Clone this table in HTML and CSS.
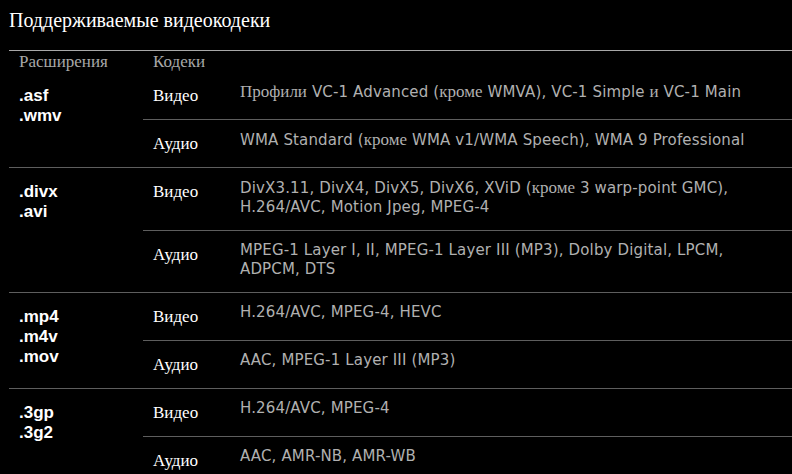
FILE: index.html
```html
<!DOCTYPE html>
<html lang="ru">
<head>
<meta charset="utf-8">
<title>Поддерживаемые видеокодеки</title>
<link rel="stylesheet" href="styles.css">
</head>
<body>
<div class="page">
  <h2 class="title">Поддерживаемые видеокодеки</h2>
  <table class="codecs">
    <thead>
      <tr>
        <th class="h-ext">Расширения</th>
        <th class="h-codec" colspan="2">Кодеки</th>
      </tr>
    </thead>
    <tbody>
      <tr class="grp first">
        <td class="ext" rowspan="2">.asf<br>.wmv</td>
        <td class="kind">Видео</td>
        <td class="codec"><span class="ru">Профили</span> VC-1 Advanced (<span class="ru">кроме</span> WMVA), VC-1 Simple <span class="ru">и</span> VC-1 Main</td>
      </tr>
      <tr class="sub">
        <td class="kind">Аудио</td>
        <td class="codec">WMA Standard (<span class="ru">кроме</span> WMA v1/WMA Speech), WMA 9 Professional</td>
      </tr>
      <tr class="grp">
        <td class="ext" rowspan="2">.divx<br>.avi</td>
        <td class="kind">Видео</td>
        <td class="codec">DivX3.11, DivX4, DivX5, DivX6, XViD (<span class="ru">кроме</span> 3 warp-point GMC),<br>H.264/AVC, Motion Jpeg, MPEG-4</td>
      </tr>
      <tr class="sub">
        <td class="kind">Аудио</td>
        <td class="codec">MPEG-1 Layer I, II, MPEG-1 Layer III (MP3), Dolby Digital, LPCM,<br>ADPCM, DTS</td>
      </tr>
      <tr class="grp">
        <td class="ext" rowspan="2">.mp4<br>.m4v<br>.mov</td>
        <td class="kind">Видео</td>
        <td class="codec">H.264/AVC, MPEG-4, HEVC</td>
      </tr>
      <tr class="sub">
        <td class="kind">Аудио</td>
        <td class="codec">AAC, MPEG-1 Layer III (MP3)</td>
      </tr>
      <tr class="grp">
        <td class="ext" rowspan="2">.3gp<br>.3g2</td>
        <td class="kind">Видео</td>
        <td class="codec">H.264/AVC, MPEG-4</td>
      </tr>
      <tr class="sub">
        <td class="kind">Аудио</td>
        <td class="codec">AAC, AMR-NB, AMR-WB</td>
      </tr>
    </tbody>
  </table>
</div>
</body>
</html>
```

FILE: styles.css
```css
html, body {
  margin: 0;
  padding: 0;
  background: #000;
  overflow: hidden;
}
.page {
  padding-left: 9px;
  font-family: "Liberation Serif", "Times New Roman", serif;
  color: #fff;
}
.title {
  margin: 0;
  padding-top: 8px;
  height: 50px;
  box-sizing: border-box;
  font-weight: normal;
  font-size: 20px;
  line-height: 24px;
}
.codecs {
  width: 783px;
  border-collapse: collapse;
  border-top: 1px solid #a8a8a8;
}
.codecs th {
  text-align: left;
  font-weight: normal;
  font-size: 17px;
  line-height: 20px;
  color: #a8a8a8;
  padding: 1px 0 0 10px;
  height: 20px;
  vertical-align: top;
}
.h-ext { width: 124px; }
.codecs td {
  vertical-align: top;
  padding: 0;
}
.grp td,
.sub td { border-top: 1px solid #5e5e5e; }
.grp.first td { border-top: none; }
.ext {
  width: 124px;
  padding: 14px 0 0 10px !important;
  font-family: "Liberation Sans", Arial, sans-serif;
  font-weight: bold;
  font-size: 17px;
  line-height: 20px;
  color: #fff;
}
.kind {
  width: 77px;
  padding: 14px 0 13px 10px !important;
  height: 20px;
  font-size: 17px;
  line-height: 20px;
  color: #fff;
}
.codec {
  padding: 10px 0 13px 10px !important;
  font-family: "DejaVu Sans", "Open Sans", sans-serif;
  font-size: 15px;
  line-height: 19px;
  letter-spacing: 0.15px;
  color: #b0b0b0;
}
.ru {
  font-family: "Liberation Serif", "Times New Roman", serif;
  font-size: 17px;
  letter-spacing: 0;
}
```
